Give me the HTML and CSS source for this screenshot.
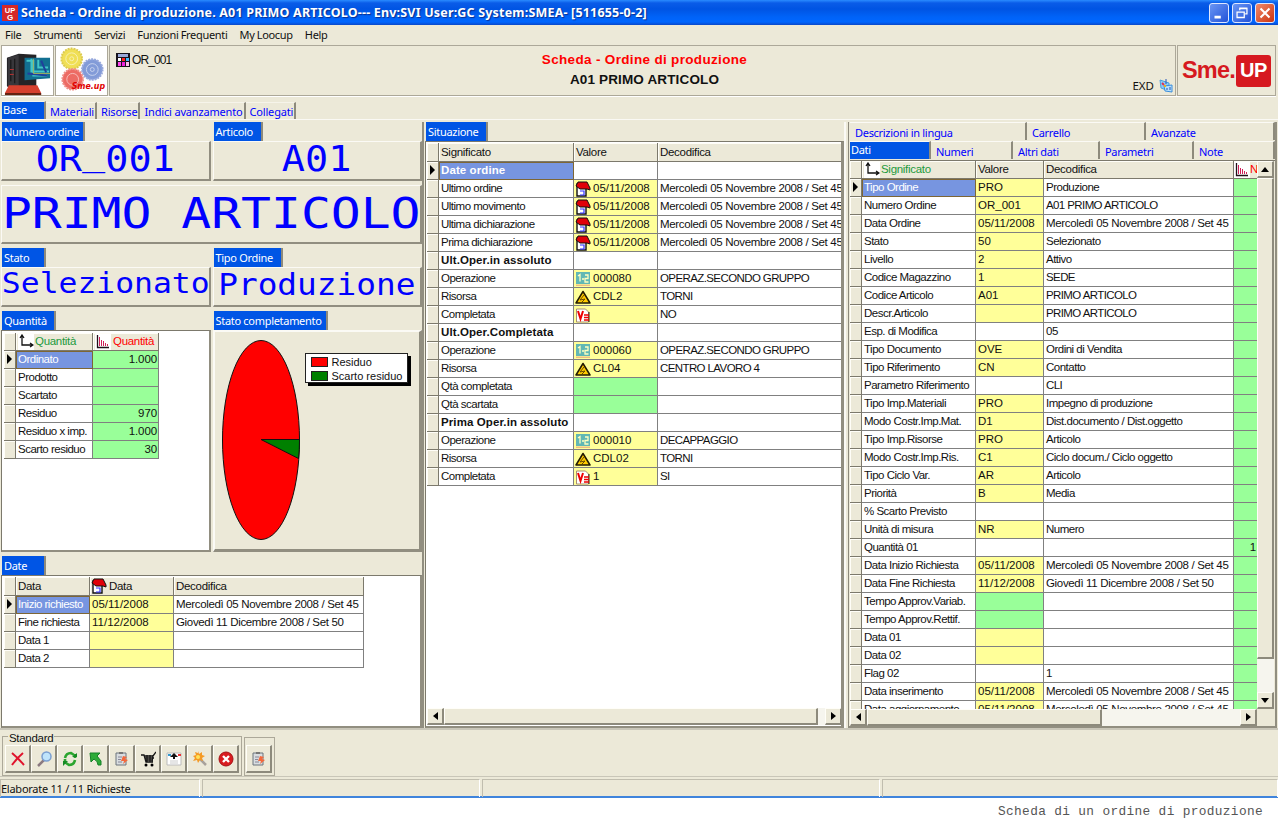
FILE: index.html
```html
<!DOCTYPE html>
<html lang="it">
<head>
<meta charset="utf-8">
<title>Scheda - Ordine di produzione</title>
<link rel="stylesheet" href="styles.css">
</head>
<body>
<svg class="defs" width="0" height="0">
  <symbol id="cal" viewBox="0 0 16 16"><path d="M2 3h9v12H2z" fill="#fff" stroke="#111" stroke-width="1.4"/><path d="M3 1h9l3 6v2l-3-1H5L1 5z" fill="#e00008" stroke="#111"/><path d="M5 10h4v4H5M9 10v3" fill="none" stroke="#33f" stroke-width="1.2"/></symbol>
  <symbol id="op" viewBox="0 0 16 16"><path d="M1 1h14v12H1z" fill="#62b8b4"/><path d="M1 14.2h14" stroke="#e5a07a"/><path d="M3 5l2-1.500v7M7 8h2M10 4h3v3.500h-3V11h3.500" fill="none" stroke="#ffffc0" stroke-width="1.300"/></symbol>
  <symbol id="warn" viewBox="0 0 16 16"><path d="M8 2.500L15 14H1z" fill="#fc0" stroke="#221a00" stroke-width="1.500" stroke-linejoin="round"/><path d="M9 6l-4 5 5-1-3 3" fill="none" stroke="#6b4a00"/></symbol>
  <symbol id="vi" viewBox="0 0 16 16"><path d="M1.500 2h9l3 3v10h-12z" fill="#fff" stroke="#a89070"/><path d="M14 5v10" stroke="#222"/><path d="M3 4l2.500 8L8 4" fill="none" stroke="#e00" stroke-width="2"/><path d="M9 8h5M9 10.500h5M9 13h5" stroke="#e00" stroke-width="1.500"/></symbol>
  <symbol id="axes" viewBox="0 0 16 16"><path d="M0 0h16v16H0z" fill="#fff"/><path d="M4 2v9h10M2 4l2-3 2 3M12 9l3 2-3 2" fill="none" stroke="#111" stroke-width="1.300"/></symbol>
  <symbol id="bars" viewBox="0 0 16 16"><path d="M0 0h16v16H0z" fill="#fff"/><path d="M2.500 1v12.500H14" fill="none" stroke="#201018" stroke-width="1.300"/><path d="M4.500 3v9M6.500 6v6M8.500 7v5M10.500 9v3M12.500 10v2" stroke="#d0205a"/></symbol>
  <symbol id="note" viewBox="0 0 16 16"><path d="M2 2h10v12H2z" fill="#d9dde0" stroke="#6c747c"/><path d="M5 1h4v2H5z" fill="#777"/><path d="M4 6h4M4 8.500h3M4 11h4" stroke="#889"/><path d="M9 5l4 1-2 2 3 1-5 4 1-3-3 0z" fill="#f4683c"/></symbol>
</svg>
<div class="window">
  <header class="titlebar">
    <svg class="app" viewBox="0 0 16 16"><path d="M0 0h16v16H0z" fill="#d52828"/><text x="8" y="7.500" font-size="7.500" text-anchor="middle" class="apptxt">UP</text><text x="8" y="15" font-size="8" text-anchor="middle" class="apptxt">G</text></svg>
    <h1>Scheda - Ordine di produzione. A01 PRIMO ARTICOLO--- Env:SVI User:GC System:SMEA- [511655-0-2]</h1>
    <div class="winbtns">
      <svg viewBox="0 0 20 20"><path d="M5 13h7v3H5z" fill="#fff"/></svg>
      <svg viewBox="0 0 20 20"><path d="M7.500 7V5h8v6h-2M7 4.500h9M4.500 9h8v6h-8zM4 9h9" fill="none" stroke="#fff" stroke-width="1.400"/></svg>
      <svg class="close" viewBox="0 0 20 20"><path d="M5 5l10 10M15 5L5 15" stroke="#fff" stroke-width="2.300"/></svg>
    </div>
  </header>
  <nav class="menu"><span>File</span><span>Strumenti</span><span>Servizi</span><span>Funzioni Frequenti</span><span>My Loocup</span><span>Help</span></nav>
  <section class="banner">
    <div class="pic"><svg viewBox="0 0 50 50"><path d="M0 0h50v50H0z" fill="#fff"/><path d="M4 12l12-4 18 1v37l-17 3-13-8z" fill="#242326"/><path d="M5 12l11-3v39L5 41z" fill="#38373b"/><path d="M8 14v22M12 13v25" stroke="#111"/><path d="M7 24h4M7 29h4" stroke="#b33"/><path d="M22 12h26v21l-26 2z" fill="#126f91"/><path d="M24 15h7v15h14M29 13v13h18M36 14v8h10" fill="none" stroke="#43c5c7" stroke-width="2"/><path d="M25 28l20 2M39 15l5 12" stroke="#20409c" stroke-width="2"/><path d="M31 13v15h17" fill="none" stroke="#a0b060"/><path d="M6 40h29l4 8H2z" fill="#d6402e"/><path d="M2 48h37v2H2z" fill="#621"/></svg></div>
    <div class="pic"><svg viewBox="0 0 50 50"><path d="M0 0h50v50H0z" fill="#fff"/><g stroke-dasharray="2 1"><circle cx="15" cy="13" r="10.500" fill="#f0df55" stroke="#dccb50" stroke-width="2"/><circle cx="36" cy="24" r="10.500" fill="#829bd8" stroke="#98a9dd" stroke-width="2"/><circle cx="16" cy="34" r="10.500" fill="#ed6b64" stroke="#ef918a" stroke-width="2"/></g><g fill="none" stroke="#fff" opacity=".55"><circle cx="15" cy="13" r="6"/><circle cx="36" cy="24" r="6"/><circle cx="16" cy="34" r="6"/><circle cx="15" cy="13" r="2"/><circle cx="36" cy="24" r="2"/></g><text x="15" y="44" class="smtxt" textLength="34" lengthAdjust="spacingAndGlyphs">Sme.up</text></svg></div>
    <div class="heading">
      <div class="code"><svg viewBox="0 0 14 14"><path d="M0 0h14v14H0z" fill="#18141c"/><path d="M2 1h10v3H2z" fill="#99a8d8"/><path d="M2 5h3v3H2z" fill="#fff"/><path d="M6 5h3v3H6z" fill="#f22"/><path d="M10 5h3v3h-3z" fill="#4bf"/><path d="M2 9h3v4H2z" fill="#f4e"/><path d="M6 9h3v4H6z" fill="#e2d"/><path d="M10 9h3v4h-3z" fill="#fbe"/></svg>OR_001</div>
      <div class="headtext"><p class="red">Scheda - Ordine di produzione</p><p>A01 PRIMO ARTICOLO</p></div>
      <div class="exd">EXD <svg viewBox="0 0 14 14"><path d="M1 1l9 3v8L2 9z" fill="#8cccf5" stroke="#4b9ee0"/><path d="M5 7l8-1v7l-7-1z" fill="#b7e0fa" stroke="#3b8edc"/><path d="M3 4l2 2" stroke="#d35" stroke-width="2"/><path d="M7 0v5M8 9v2M11 8v3" stroke="#2554b8"/><path d="M5 7h2" stroke="#e8b020" stroke-width="2"/></svg></div>
    </div>
    <div class="logo"><span>Sme.</span><b>UP</b></div>
  </section>
  <nav class="tabs"><span class="on">Base</span><span>Materiali</span><span>Risorse</span><span>Indici avanzamento</span><span>Collegati</span></nav>
  <main class="content">
    <div class="left">
      <div class="pair r1">
        <div class="box"><h2 class="cap w82">Numero ordine</h2><div class="panel big"><span class="k1">OR<u>_</u>001</span></div></div>
        <div class="box"><h2 class="cap w48">Articolo</h2><div class="panel big"><span class="k1">A01</span></div></div>
      </div>
      <div class="panel wide big"><span class="k2">PRIMO ARTICOLO</span></div>
      <div class="pair r1">
        <div class="box"><h2 class="cap w43">Stato</h2><div class="panel big"><span class="k3">Selezionato</span></div></div>
        <div class="box"><h2 class="cap w68">Tipo Ordine</h2><div class="panel big"><span class="k4">Produzione</span></div></div>
      </div>
      <div class="pair r2">
        <div class="box"><h2 class="cap w53">Quantità</h2><div class="panel sheet">
          <div class="grid gq">
            <i class="h"></i><span class="h"><svg><use href="#axes"/></svg><em class="grn">Quantità</em></span><span class="h"><svg><use href="#bars"/></svg><em class="redt">Quantità</em></span>
            <i class="cur"></i><span class="sel">Ordinato</span><span class="g">1.000</span>
            <i></i><span>Prodotto</span><span class="g"></span>
            <i></i><span>Scartato</span><span class="g"></span>
            <i></i><span>Residuo</span><span class="g">970</span>
            <i></i><span>Residuo x imp.</span><span class="g">1.000</span>
            <i></i><span>Scarto residuo</span><span class="g">30</span>
          </div></div></div>
        <div class="box"><h2 class="cap w113">Stato completamento</h2><div class="panel chart">
          <svg class="pie" viewBox="0 0 80 202"><ellipse cx="40" cy="101" rx="38.500" ry="99.500" fill="#f00" stroke="#111"/><path d="M40 100.500h38.500q0 10-1 19z" fill="#008000" stroke="#111"/></svg>
          <div class="legend"><p><s></s>Residuo</p><p><s class="dg"></s>Scarto residuo</p></div>
        </div></div>
      </div>
      <div class="box r3"><h2 class="cap w43">Date</h2><div class="panel sheet">
        <div class="grid gd">
          <i class="h"></i><span class="h">Data</span><span class="h ic"><svg><use href="#cal"/></svg>Data</span><span class="h">Decodifica</span>
          <i class="cur"></i><span class="sel">Inizio richiesto</span><span class="y">05/11/2008</span><span class="d">Mercoledì 05 Novembre 2008 / Set 45</span>
          <i></i><span>Fine richiesta</span><span class="y">11/12/2008</span><span class="d">Giovedì 11 Dicembre 2008 / Set 50</span>
          <i></i><span>Data 1</span><span class="y"></span><span></span>
          <i></i><span>Data 2</span><span class="y"></span><span></span>
        </div></div></div>
    </div>
    <div class="mid">
      <h2 class="cap w60">Situazione</h2>
      <div class="panel sheet">
        <div class="grid gs">
          <i class="h"></i><span class="h">Significato</span><span class="h">Valore</span><span class="h">Decodifica</span>
          <i class="cur"></i><span class="sel bd">Date ordine</span><span></span><span></span>
          <i></i><span>Ultimo ordine</span><span class="y ic"><svg><use href="#cal"/></svg>05/11/2008</span><span class="d">Mercoledì 05 Novembre 2008 / Set 45</span>
          <i></i><span>Ultimo movimento</span><span class="y ic"><svg><use href="#cal"/></svg>05/11/2008</span><span class="d">Mercoledì 05 Novembre 2008 / Set 45</span>
          <i></i><span>Ultima dichiarazione</span><span class="y ic"><svg><use href="#cal"/></svg>05/11/2008</span><span class="d">Mercoledì 05 Novembre 2008 / Set 45</span>
          <i></i><span>Prima dichiarazione</span><span class="y ic"><svg><use href="#cal"/></svg>05/11/2008</span><span class="d">Mercoledì 05 Novembre 2008 / Set 45</span>
          <i></i><span class="bd">Ult.Oper.in assoluto</span><span></span><span></span>
          <i></i><span>Operazione</span><span class="y ic"><svg><use href="#op"/></svg>000080</span><span class="u">OPERAZ.SECONDO GRUPPO</span>
          <i></i><span>Risorsa</span><span class="y ic"><svg><use href="#warn"/></svg>CDL2</span><span class="u">TORNI</span>
          <i></i><span>Completata</span><span class="y ic"><svg><use href="#vi"/></svg></span><span class="u">NO</span>
          <i></i><span class="bd">Ult.Oper.Completata</span><span></span><span></span>
          <i></i><span>Operazione</span><span class="y ic"><svg><use href="#op"/></svg>000060</span><span class="u">OPERAZ.SECONDO GRUPPO</span>
          <i></i><span>Risorsa</span><span class="y ic"><svg><use href="#warn"/></svg>CL04</span><span class="u">CENTRO LAVORO 4</span>
          <i></i><span>Qtà completata</span><span class="g"></span><span></span>
          <i></i><span>Qtà scartata</span><span class="g"></span><span></span>
          <i></i><span class="bd">Prima Oper.in assoluto</span><span></span><span></span>
          <i></i><span>Operazione</span><span class="y ic"><svg><use href="#op"/></svg>000010</span><span class="u">DECAPPAGGIO</span>
          <i></i><span>Risorsa</span><span class="y ic"><svg><use href="#warn"/></svg>CDL02</span><span class="u">TORNI</span>
          <i></i><span>Completata</span><span class="y ic"><svg><use href="#vi"/></svg>1</span><span class="u">SI</span>
        </div>
        <div class="hscroll"><button class="lt"></button><div class="thumb t1"></div><button class="rt"></button></div>
      </div>
    </div>
    <div class="right">
      <nav class="rt1"><span>Descrizioni in lingua</span><span>Carrello</span><span>Avanzate</span></nav>
      <nav class="rt2"><span class="on">Dati</span><span>Numeri</span><span>Altri dati</span><span>Parametri</span><span>Note</span></nav>
      <div class="view">
        <div class="clip"><div class="grid gr">
          <i class="h"></i><span class="h"><svg><use href="#axes"/></svg><em class="grn">Significato</em></span><span class="h">Valore</span><span class="h">Decodifica</span><span class="h"><svg><use href="#bars"/></svg><em class="redt">N</em></span>
          <i class="cur"></i><span class="sel">Tipo Ordine</span><span class="y">PRO</span><span>Produzione</span><span class="g"></span>
          <i></i><span>Numero Ordine</span><span class="y">OR_001</span><span class="u">A01 PRIMO ARTICOLO</span><span class="g"></span>
          <i></i><span>Data Ordine</span><span class="y">05/11/2008</span><span class="d">Mercoledì 05 Novembre 2008 / Set 45</span><span class="g"></span>
          <i></i><span>Stato</span><span class="y">50</span><span>Selezionato</span><span class="g"></span>
          <i></i><span>Livello</span><span class="y">2</span><span>Attivo</span><span class="g"></span>
          <i></i><span>Codice Magazzino</span><span class="y">1</span><span class="u">SEDE</span><span class="g"></span>
          <i></i><span>Codice Articolo</span><span class="y">A01</span><span class="u">PRIMO ARTICOLO</span><span class="g"></span>
          <i></i><span>Descr.Articolo</span><span class="y"></span><span class="u">PRIMO ARTICOLO</span><span class="g"></span>
          <i></i><span>Esp. di Modifica</span><span></span><span>05</span><span class="g"></span>
          <i></i><span>Tipo Documento</span><span class="y">OVE</span><span>Ordini di Vendita</span><span class="g"></span>
          <i></i><span>Tipo Riferimento</span><span class="y">CN</span><span>Contatto</span><span class="g"></span>
          <i></i><span>Parametro Riferimento</span><span></span><span class="u">CLI</span><span class="g"></span>
          <i></i><span>Tipo Imp.Materiali</span><span class="y">PRO</span><span>Impegno di produzione</span><span class="g"></span>
          <i></i><span>Modo Costr.Imp.Mat.</span><span class="y">D1</span><span>Dist.documento / Dist.oggetto</span><span class="g"></span>
          <i></i><span>Tipo Imp.Risorse</span><span class="y">PRO</span><span>Articolo</span><span class="g"></span>
          <i></i><span>Modo Costr.Imp.Ris.</span><span class="y">C1</span><span>Ciclo docum./ Ciclo oggetto</span><span class="g"></span>
          <i></i><span>Tipo Ciclo Var.</span><span class="y">AR</span><span>Articolo</span><span class="g"></span>
          <i></i><span>Priorità</span><span class="y">B</span><span>Media</span><span class="g"></span>
          <i></i><span>% Scarto Previsto</span><span></span><span></span><span class="g"></span>
          <i></i><span>Unità di misura</span><span class="y">NR</span><span>Numero</span><span class="g"></span>
          <i></i><span>Quantità 01</span><span></span><span></span><span class="g">1</span>
          <i></i><span>Data Inizio Richiesta</span><span class="y">05/11/2008</span><span class="d">Mercoledì 05 Novembre 2008 / Set 45</span><span class="g"></span>
          <i></i><span>Data Fine Richiesta</span><span class="y">11/12/2008</span><span class="d">Giovedì 11 Dicembre 2008 / Set 50</span><span class="g"></span>
          <i></i><span>Tempo Approv.Variab.</span><span class="g"></span><span></span><span class="g"></span>
          <i></i><span>Tempo Approv.Rettif.</span><span class="g"></span><span></span><span class="g"></span>
          <i></i><span>Data 01</span><span class="y"></span><span></span><span class="g"></span>
          <i></i><span>Data 02</span><span class="y"></span><span></span><span class="g"></span>
          <i></i><span>Flag 02</span><span></span><span>1</span><span class="g"></span>
          <i></i><span>Data inserimento</span><span class="y">05/11/2008</span><span class="d">Mercoledì 05 Novembre 2008 / Set 45</span><span class="g"></span>
          <i></i><span>Data aggiornamento</span><span class="y">05/11/2008</span><span class="d">Mercoledì 05 Novembre 2008 / Set 45</span><span class="g"></span>
        </div></div>
        <div class="vscroll"><button class="up"></button><div class="vthumb"></div><button class="dn"></button></div>
      </div>
      <div class="hscroll rs"><button class="lt"></button><div class="thumb t2"></div><button class="rt"></button></div>
    </div>
  </main>
  <section class="actions">
    <fieldset><legend>Standard</legend>
      <button><svg viewBox="0 0 16 16"><path d="M2 2q6 5 12 12M13 2Q7 7 2 14" fill="none" stroke="#e0142c" stroke-width="2"/></svg></button>
      <button><svg viewBox="0 0 16 16"><path d="M8 9l-6 6" stroke="#8b7a80" stroke-width="2.500"/><circle cx="10.500" cy="5.500" r="4.500" fill="#bfe4fb" stroke="#7a9fd0" stroke-width="1.500"/></svg></button>
      <button><svg viewBox="0 0 16 16"><path d="M3 7q1-5 6-5l3 2M13 9q-1 5-6 5l-3-2M3 8v5M13 7v-4" fill="none" stroke="#2ba52f" stroke-width="2.600"/><path d="M10 6h5V2zM6 10H1v5z" fill="#178a25"/></svg></button>
      <button><svg viewBox="0 0 16 16"><path d="M2 2h10l-3 3 4 5v4l-3 0q0-4-4-6L3 11z" fill="#2cab38" stroke="#158028"/></svg></button>
      <button><svg viewBox="0 0 16 16"><use href="#note"/></svg></button>
      <button><svg viewBox="0 0 16 16"><path d="M1 4h3l2 7h7M4 5h9l3-4M5 7h9M6 9h7M7 4v7M10 4v7M13 4l-1 7" fill="none" stroke="#161616" stroke-width="1.300"/><circle cx="6" cy="14" r="1.500"/><circle cx="12" cy="14" r="1.500"/></svg></button>
      <button><svg viewBox="0 0 16 16"><path d="M1 2h14v12H1z" fill="#fff" stroke="#bbb"/><path d="M2 4h3" stroke="#39c" stroke-width="2"/><path d="M12 4h3" stroke="#e33" stroke-width="2"/><path d="M8 2l4 4H9v2H7V6H4z" fill="#111"/><path d="M4 10h8M4 12h8" stroke="#ccc"/></svg></button>
      <button><svg viewBox="0 0 16 16"><path d="M8 8l6 6" stroke="#a8a19b" stroke-width="2.500"/><path d="M6 0l1 3 3-2v3l3 1-3 2 1 3-3-1-2 3-1-3-4 1 2-3-2-2 3-1-1-3 3 1z" fill="#f59a24"/><circle cx="6" cy="6" r="2" fill="#ffe35c"/></svg></button>
      <button><svg viewBox="0 0 16 16"><circle cx="8" cy="8" r="7" fill="#d91c20" stroke="#a51114"/><path d="M5 5l6 6M11 5l-6 6" stroke="#fff" stroke-width="2.400"/></svg></button>
    </fieldset>
    <div class="extra"><button><svg viewBox="0 0 16 16"><use href="#note"/></svg></button></div>
  </section>
  <footer class="status"><span>Elaborate 11 / 11 Richieste</span><span></span><span></span><span></span></footer>
</div>
<p class="caption">Scheda di un ordine di produzione</p>
</body>
</html>
```
FILE: styles.css
```css
* { box-sizing: border-box; }
body { margin: 0; width: 1280px; height: 820px; overflow: hidden; background: #fff; color: #111; font: 11.5px/17px "Liberation Sans", Arial, sans-serif; }
h1, h2, p { margin: 0; }
button { padding: 0; margin: 0; font: inherit; }
.defs { position: absolute; }
.window { width: 1278px; height: 798px; background: #ece9d8; border-bottom: 2px solid #3f84dc; display: flex; flex-direction: column; }

.titlebar { height: 25px; display: flex; align-items: center; padding: 0 3px 0 2px; background: linear-gradient(#2a8bff 0, #0a5ce8 3px, #0054e3 9px, #0063f8 17px, #0066ff 22px, #0b48c8 25px); }
.app { width: 16px; height: 16px; margin-right: 3px; }
.apptxt { fill: #fff; font-family: "Liberation Sans", sans-serif; font-weight: bold; }
.titlebar h1 { flex: 1; color: #fff; font: bold 12.5px/25px "Noto Sans", sans-serif; white-space: nowrap; text-shadow: 1px 1px 1px #0a2f90; letter-spacing: 0.185px; }
.winbtns { display: flex; gap: 3px; }
.winbtns svg { width: 20px; height: 20px; border: 1px solid #dfe8ff; border-radius: 3px; background: linear-gradient(135deg, #6a96f4, #2252d8); }
.winbtns .close { background: linear-gradient(135deg, #f08a6c, #cc3410); }

.menu { height: 20px; padding-left: 5px; display: flex; gap: 12px; font: 11px/19px "Noto Sans", sans-serif; letter-spacing: -0.3px; word-spacing: -.4px; }

.banner { height: 53px; margin: 1px 2px 0 1px; display: flex; gap: 1px; border-bottom: 1px solid #fff; }
.banner > div { border: 1px solid #aca899; height: 51px; }
.pic { width: 53px; background: #fff; padding: 0 1px; }
.pic svg { display: block; width: 49px; height: 49px; }
.smtxt { fill: #e00000; font: italic bold 9.5px "DejaVu Sans", sans-serif; }
.heading { flex: 1; display: grid; grid-template-columns: 200px 1fr 200px; padding: 4px 2px 0 6px; font-size: 12px; }
.code { display: flex; gap: 2px; letter-spacing: -.9px; height: 20px; align-items: center; }
.code svg { width: 14px; height: 14px; }
.headtext { text-align: center; font-weight: bold; font-size: 13.5px; line-height: 20px; letter-spacing: .15px; }
.red { color: #f00; }
.headtext .red { letter-spacing: .33px; }
.exd { align-self: end; display: flex; justify-content: flex-end; align-items: center; gap: 5px; font: 11.5px/18px "Noto Sans", sans-serif; }
.exd svg { width: 14px; height: 14px; }
.logo { width: 99px; display: flex; align-items: center; padding: 0 0 0 4px; color: #d61920; font-weight: bold; font-size: 23.5px; letter-spacing: -.8px; }
.logo b { width: 35px; height: 32px; margin-left: 1px; border-radius: 3px; background: #d61920; color: #fff; text-align: center; font: bold 20px/31px "Liberation Sans", sans-serif; letter-spacing: -.5px; }

.tabs { height: 23px; display: flex; padding: 4px 0 0 2px; font: 11px/20px "Noto Sans", sans-serif; letter-spacing: -.17px; color: #00f; border-bottom: 1px solid #faf9f4; }
.tabs span { padding: 0 1px 0 4px; height: 17px; border-right: 2px solid #8d8a7c; border-top: 1px solid #f6f4ea; white-space: nowrap; margin-top: 1px; line-height: 17px; }
.tabs .on { width: 44px; margin-top: 0; padding-left: 1px; height: 18px; background: #0055e5; color: #fff; line-height: 16px; }

.content { height: 608px; padding-top: 2px; display: flex; }
.left { width: 424px; border-right: 2px solid #918e80; padding-left: 1px; }
.pair { display: flex; gap: 2px; }
.box { display: flex; flex-direction: column; width: 210px; }
.cap { height: 19px; margin-left: 1px; background: #0055e5; border-right: 2px solid #8d8a7c; color: #fff; padding-left: 2px; font: 11px/19px "Noto Sans", sans-serif; letter-spacing: -.3px; white-space: nowrap; overflow: hidden; }
.w82 { width: 83px; } .w48 { width: 49px; } .w43 { width: 44px; } .w68 { width: 69px; } .w53 { width: 54px; } .w113 { width: 114px; } .w60 { width: 62px; }
.panel { flex: 1; border: solid; border-width: 1px 2px 2px 1px; border-color: #fbfaf5 #918e80 #918e80 #fbfaf5; overflow: hidden; }
.r1 { height: 59px; }
.wide { width: 421px; height: 59px; margin: 4px 0; }
.r2 { height: 241px; margin-top: 4px; }
.left .r3 { width: 421px; height: 172px; margin-top: 4px; }
.big { display: flex; justify-content: center; align-items: center; color: #00f; font-family: "DejaVu Sans Mono", monospace; }
.big span { flex: none; white-space: pre; }
.big u { text-decoration: none; vertical-align: 6px; line-height: 1px; }
.k1 { font-size: 35px; line-height: 36px; transform: translateY(-2px) scaleX(1.1); }
.k2 { font-size: 43px; transform: translateY(-1px) scaleX(1.155); line-height: 50px; }
.k3 { font-size: 28px; transform: translateY(-3px) scaleX(1.12); line-height: 36px; }
.k4 { font-size: 29.5px; transform: translateY(-2px) scaleX(1.11); line-height: 36px; }
.sheet { background: #fff; border-color: #7c796c #918e80 #918e80 #7c796c; padding-left: 1px; }
.left .sheet { padding-left: 2px; }

.grid { display: grid; grid-auto-rows: 18px; background: #fff; width: max-content; letter-spacing: -.5px; }
.grid > * { border-right: 1px solid #808080; border-bottom: 1px solid #808080; overflow: hidden; white-space: nowrap; padding-left: 2px; font-style: normal; }
.grid > i, .grid > .h { background: #ece9d8; border-color: #7c796c; }
.grid > i { box-shadow: inset 1px 1px #fffef8; padding: 0; }
.grid em { font-style: normal; letter-spacing: -.3px; }
.grid > .h { display: flex; align-items: center; letter-spacing: -.3px; box-shadow: inset 1px 1px #fffef8; }
.grid svg { width: 16px; height: 16px; flex: none; }
.grn { color: #1d9a3d; margin-left: 1px; } .redt { color: #f00; margin-left: 2px; }
.grid > .sel { background: #7795e0; color: #fff; border: 1px solid #7d6635; line-height: 15px; padding-left: 1px; }
.grid > .y { background: #ffff99; letter-spacing: 0; }
.grid > .g { background: #99ff99; text-align: right; padding-right: 1px; letter-spacing: -.1px; }
.grid > .ic { display: flex; align-items: center; gap: 2px; padding-left: 1px; }
.grid > .d { letter-spacing: -.34px; }
.grid > .u { letter-spacing: -.6px; }
.grid > .bd { font-weight: bold; font-size: 11.5px; letter-spacing: .1px; }
.cur::after { content: ""; display: block; margin: 3px 0 0 3px; width: 0; border-left: 5px solid #000; border-top: 5px solid transparent; border-bottom: 5px solid transparent; }
.gq { grid-template-columns: 12px 77px 66px; padding-top: 2px; }
.gd { grid-template-columns: 12px 74px 84px 190px; grid-template-rows: 19px; padding-top: 1px; }
.gs { grid-template-columns: 12px 135px 84px 185px; grid-template-rows: 19px; height: 566px; align-content: start; padding-top: 1px; }
.gs > :nth-child(4n) { border-right: 0; }
.gr { grid-template-columns: 12px 114px 68px 190px 23px; grid-template-rows: 18px; }
.gr > .h:nth-child(5) { padding-left: 0; overflow: hidden; }
.gr > .h .redt { margin-left: 0; }
.gr > :nth-child(5n) { border-right: 0; }

.chart { display: flex; padding: 7px 0 0 6px; border-width: 2px 3px 3px 2px; }
.pie { width: 80px; height: 202px; flex: none; }
.legend { width: 103px; height: 30px; margin: 14px 0 0 4px; padding: 1px 0 0 5px; border: 1px solid #222; background: #fff; box-shadow: 3px 3px #000; font-size: 11px; line-height: 14px; white-space: nowrap; }
.legend p { display: flex; align-items: center; gap: 4px; height: 14px; }
.legend s { width: 17px; height: 10px; background: #f00; border: 1px solid #222; }
.legend .dg { background: #008000; }

.mid { width: 422px; padding: 0 0 0 1px; display: flex; flex-direction: column; border-right: 2px solid #fbfaf5; }
.mid .panel { border-right-width: 3px; }
.hscroll { display: flex; height: 17px; background: #f6f5ee; width: 415px; }
.hscroll button, .vscroll button, .thumb, .vthumb { background: #ece9d8; border: solid; border-width: 1px 2px 2px 1px; border-color: #fffef8 #8d8a7c #8d8a7c #fffef8; }
.hscroll button { width: 17px; display: grid; place-items: center; }
.lt::after { content: ""; border: 4px solid transparent; border-right: 5px solid #000; border-left: 0; }
.rt::after { content: ""; border: 4px solid transparent; border-left: 5px solid #000; border-right: 0; }
.rt { margin-left: auto; }
.t1 { width: 374px; } .t2 { width: 235px; }

.right { width: 429px; margin-left: 2px; border-right: 2px solid #918e80; border-bottom: 2px solid #918e80; border-left: 1px solid #8d8a7c; padding-left: 1px; }
.right nav { display: grid; height: 19px; color: #00f; font: 11px/22px "Noto Sans", sans-serif; letter-spacing: -.3px; width: 425px; }
.right nav span { border-right: 2px solid #8d8a7c; border-top: 1px solid #fbfaf5; padding-left: 5px; height: 18px; line-height: 20px; }
.rt1 { grid-template-columns: 177px 119px 129px; }
.rt2 { grid-template-columns: 81px 82px 87px 94px 81px; }
.right nav .on { background: #0055e5; color: #fff; padding-left: 1px; line-height: 16px; }
.view { display: flex; height: 549px; border-top: 1px solid #7c796c; }
.clip { width: 407px; height: 548px; overflow: hidden; }
.vscroll { width: 17px; display: flex; flex-direction: column; background: #f6f5ee; }
.vscroll button { height: 17px; display: grid; place-items: center; }
.up::after { content: ""; border: 4px solid transparent; border-bottom: 5px solid #000; border-top: 0; }
.dn::after { content: ""; border: 4px solid transparent; border-top: 5px solid #000; border-bottom: 0; }
.vthumb { height: 481px; }
.dn { margin-top: auto; }
.rs { width: 407px; }

.actions { height: 50px; display: flex; gap: 2px; border-top: 2px solid #c9c6b8; border-bottom: 1px solid #c9c6b8; padding: 2px 0 0 2px; }
.actions fieldset { margin: 0; padding: 4px 2px 0; border: 1px solid #aca899; width: 240px; height: 44px; min-width: 0; display: flex; }
.actions legend { padding: 0 1px; margin-left: 3px; height: 9px; line-height: 13px; letter-spacing: -.3px; }
.actions button { width: 26px; height: 28px; flex: none; background: #ece9d8; border: solid; border-width: 1px 2px 2px 1px; border-color: #fffef8 #8d8a7c #8d8a7c #fffef8; display: grid; place-items: center; }
.actions svg { width: 16px; height: 16px; }
.extra { width: 31px; height: 39px; margin-top: 5px; border: 1px solid #aca899; padding: 7px 1px 0; }
.status { flex: 1; display: grid; grid-template-columns: 200px 278px 398px 1fr; gap: 2px; padding-top: 2px; font: 11px/17px "Noto Sans", sans-serif; letter-spacing: -.25px; }
.status span { border-top: 1px solid #c0bdae; border-right: 1px solid #fff; border-left: 1px solid #c0bdae; white-space: nowrap; }
.caption { width: 1263px; text-align: right; margin-top: 6px; font: 12.8px/16px "Liberation Mono", monospace; color: #555; letter-spacing: .35px; }
```
